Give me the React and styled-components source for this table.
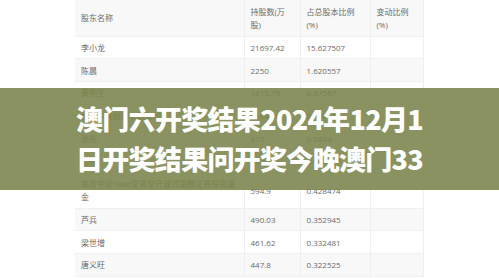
import React from 'react';
import styled, { createGlobalStyle } from 'styled-components';

const GlobalStyle = createGlobalStyle`
  html, body {
    margin: 0;
    padding: 0;
    background: #fff;
    overflow: hidden;
  }
`;

const Page = styled.div`
  position: relative;
  width: 499px;
  height: 278px;
  overflow: hidden;
  background: #fff;
`;

const TableWrap = styled.div`
  padding-left: 75px;
`;

const Table = styled.table`
  width: 348px;
  border-collapse: collapse;
  table-layout: fixed;
  font-family: 'Open Sans', 'Noto Sans CJK SC', sans-serif;
  font-size: 8px;
  color: #6a6a6a;
`;

const Row = styled.tr`
  height: ${({ tall }) => (tall ? '36px' : '22.7px')};
  background: ${({ shaded }) => (shaded ? '#f8f8f8' : '#fff')};
  border-bottom: 1px solid #f0f0f0;
`;

const Cell = styled.td`
  padding: 0 6px;
  line-height: 13px;
  vertical-align: middle;
  border-right: 1px solid #efefef;
  white-space: nowrap;
  overflow: hidden;
`;

const Band = styled.div`
  position: absolute;
  left: 0;
  top: 88px;
  width: 499px;
  height: 102px;
  background: rgba(122, 132, 76, 0.89);
  display: flex;
  flex-direction: column;
  justify-content: center;
`;

const Title = styled.h1`
  width: 100%;
  margin: 0;
  font-family: 'Noto Sans CJK SC', 'Noto Sans', sans-serif;
  font-weight: 900;
  font-size: 27px;
  line-height: 40px;
  letter-spacing: -0.7px;
  color: #fff;
  text-align: center;
  white-space: nowrap;
`;

const columns = [169, 56, 70, 53];

const rows = [
  ['李小龙', '21697.42', '15.627507'],
  ['陈晨', '2250', '1.620557'],
  ['黄明生', '1215.79', '0.87567'],
  ['香港中央结算有限公司', '1194.28', '0.860146'],
  ['张彤', '810', '0.5834'],
  ['王强', '622.16', '0.448107'],
  [['南方中证1000交易型开放式指数证券投资基', '金'], '594.9', '0.428474'],
  ['芦兵', '490.03', '0.352945'],
  ['梁世增', '461.62', '0.332481'],
  ['唐义旺', '447.8', '0.322525'],
];

const Lines = ({ parts }) =>
  parts.map((p, i) => (
    <React.Fragment key={i}>
      {i > 0 && <br />}
      {p}
    </React.Fragment>
  ));

export default function App() {
  return (
    <Page>
      <GlobalStyle />
      <TableWrap>
        <Table>
          <colgroup>
            {columns.map((w, i) => (
              <col key={i} style={{ width: w }} />
            ))}
          </colgroup>
          <tbody>
            <Row tall shaded>
              <Cell>股东名称</Cell>
              <Cell><Lines parts={['持股数(万', '股)']} /></Cell>
              <Cell><Lines parts={['占总股本比例', '(%)']} /></Cell>
              <Cell><Lines parts={['变动比例', '(%)']} /></Cell>
            </Row>
            {rows.map(([name, shares, ratio], i) => (
              <Row key={i} shaded={i % 2 === 1} tall={Array.isArray(name)}>
                <Cell>{Array.isArray(name) ? <Lines parts={name} /> : name}</Cell>
                <Cell>{shares}</Cell>
                <Cell>{ratio}</Cell>
                <Cell />
              </Row>
            ))}
          </tbody>
        </Table>
      </TableWrap>
      <Band>
        <Title>澳门六开奖结果2024年12月1</Title>
        <Title>日开奖结果问开奖今晚澳门33</Title>
      </Band>
    </Page>
  );
}
